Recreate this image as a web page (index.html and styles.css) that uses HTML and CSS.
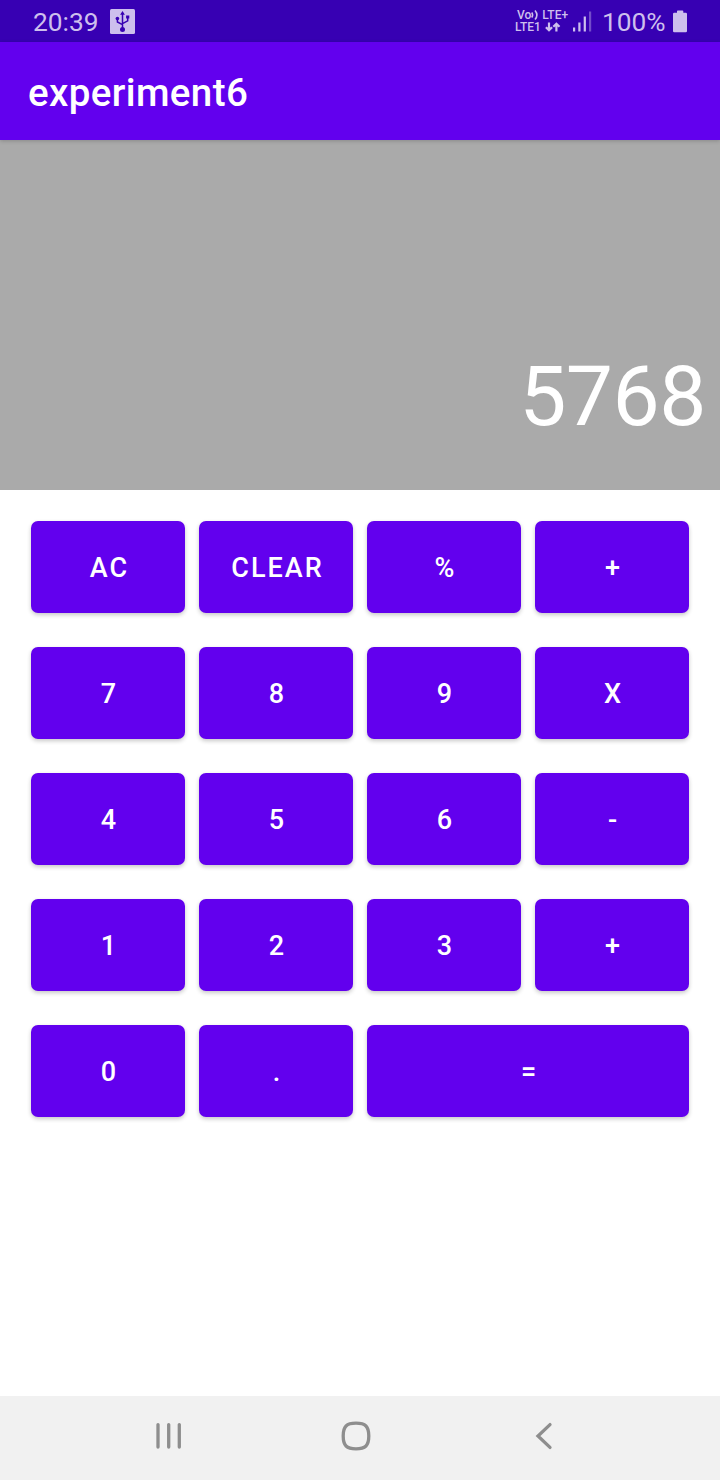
FILE: index.html
```html
<!DOCTYPE html>
<html lang="en">
<head>
<meta charset="utf-8">
<title>experiment6</title>
<link rel="stylesheet" href="styles.css">
</head>
<body>
<div class="screen">
  <div class="status">
    <span class="clock">20:39</span>
    <svg class="usb" width="25" height="25" viewBox="0 0 25 25">
      <rect class="usb-box" width="25" height="25" rx="1.5"/>
      <path class="usb-line" d="M12.5 21V4M12.500 15.700L7.400 13V9.500M12.500 14.700L17.700 11.800V8"/>
      <path class="usb-fill" d="M12.5 2L14.900 5.800H10.100zM16.100 6.400h3.200v3.200h-3.200z"/>
      <circle class="usb-fill" cx="7.4" cy="9.6" r="1.8"/>
      <circle class="usb-fill" cx="12.5" cy="20.6" r="2.5"/>
    </svg>
    <div class="network">
      <div class="net-row net-top"><span class="vo">Vo</span><svg class="waves" width="8" height="12" viewBox="0 0 8 12"><path d="M.7 3.500Q2.500 6 .7 8.500M4 1.500Q7.800 6 4 10.500"/></svg><span class="lte">LTE+</span></div>
      <div class="net-row"><span class="lte1">LTE1</span><svg class="arrows" width="16" height="10" viewBox="0 0 16 10"><path d="M4 .5V8.500M.9 5.200L4 8.300L7.100 5.200M11.400 9.500V1.500M8.300 4.800L11.400 1.700L14.500 4.800"/></svg></div>
    </div>
    <svg class="signal" width="19" height="21" viewBox="0 0 19 21"><path d="M0 16.500h2.200v4H0zM5.300 11.500h2.200v9H5.300zM10.700 5.500h2.200v15h-2.200z"/><path class="dim" d="M16 .5h2.200v20H16z"/></svg>
    <span class="percent">100%</span>
    <svg class="battery" width="14" height="23" viewBox="0 0 14 23"><path d="M4 1.2Q4 .4 4.8.4H9.5Q10.3.4 10.3 1.2V2.8H12.8Q14 2.8 14 4V21Q14 22.2 12.8 22.2H1.2Q0 22.2 0 21V4Q0 2.8 1.2 2.8H4z"/></svg>
  </div>
  <header class="appbar"><h1 class="title">experiment6</h1></header>
  <div class="display">5768</div>
  <main class="keys">
    <button class="key">AC</button><button class="key">CLEAR</button><button class="key">%</button><button class="key">+</button>
    <button class="key">7</button><button class="key">8</button><button class="key">9</button><button class="key">X</button>
    <button class="key">4</button><button class="key">5</button><button class="key">6</button><button class="key">-</button>
    <button class="key">1</button><button class="key">2</button><button class="key">3</button><button class="key">+</button>
    <button class="key">0</button><button class="key">.</button><button class="key wide">=</button>
  </main>
  <nav class="navbar">
    <svg width="26" height="28" viewBox="0 0 26 28"><path d="M2 2.6V25M12.700 2.6V25M23.300 2.6V25"/></svg>
    <svg class="home" width="30" height="30" viewBox="0 0 30 30"><path d="M15 2.200C24.500 2.200 27.800 5.500 27.800 15S24.500 27.800 15 27.800S2.200 24.500 2.200 15S5.500 2.200 15 2.200z"/></svg>
    <svg width="18" height="28" viewBox="0 0 18 28"><path d="M15 2.600L3 14L15 25.400"/></svg>
  </nav>
</div>
</body>
</html>
```
FILE: styles.css
```css
body {
  margin: 0;
  font-family: Roboto, "Liberation Sans", sans-serif;
}
.screen {
  display: flex;
  flex-direction: column;
  width: 720px;
  height: 1480px;
  background: #fff;
}
.status {
  display: flex;
  align-items: center;
  box-sizing: border-box;
  height: 42px;
  padding: 0 33px 0 33px;
  background: #3700b3;
  color: #cdbfed;
}
.status svg { flex: none; }
.clock, .percent {
  font-size: 26.3px;
  line-height: 42px;
  padding-top: 1px;
}
.clock { width: 77px; }
.usb-box { fill: #cdbfed; }
.usb-line { fill: none; stroke: #3700b3; stroke-width: 1.5; }
.usb-fill { fill: #3700b3; }
.network {
  width: 53px;
  margin-left: auto;
  font-size: 12px;
  font-weight: 500;
  line-height: 12px;
}
.net-row { display: flex; align-items: center; height: 12px; }
.net-top { padding-left: 2px; }
.waves { margin-right: 3px; }
.waves path, .arrows path { fill: none; stroke: #cdbfed; }
.waves path { stroke-width: 1.6; }
.arrows { margin-left: 4px; }
.arrows path { stroke-width: 2.2; }
.signal { margin: 0 10px 0 5px; fill: #cdbfed; }
.dim { opacity: .4; }
.percent { width: 71px; box-sizing: border-box; }
.battery { fill: #cdbfed; }
.appbar {
  display: flex;
  align-items: center;
  height: 98px;
  padding: 0 28px;
  background: #6200ee;
  position: relative;
  box-shadow: 0 1px 4px rgba(0, 0, 0, .2);
}
.title {
  margin: 3px 0 0;
  color: #fff;
  font-size: 38.5px;
  font-weight: 500;
  line-height: 46px;
  letter-spacing: .38px;
}
.display {
  display: flex;
  justify-content: flex-end;
  align-items: flex-end;
  box-sizing: border-box;
  height: 350px;
  padding: 0 14px 44px 0;
  background: #aaa;
  color: #fff;
  font-size: 84px;
  line-height: 98px;
  letter-spacing: -.5px;
}
.keys {
  display: grid;
  grid-template-columns: repeat(4, 154px);
  grid-auto-rows: 92px;
  gap: 34px 14px;
  padding: 31px;
}
.key {
  padding: 2px 0 0 3px;
  border: 0;
  border-radius: 7px;
  background: #6200ee;
  box-shadow: 0 2px 4px rgba(0, 0, 0, .22);
  color: #fff;
  font: 500 27px/32px Roboto, "Liberation Sans", sans-serif;
  letter-spacing: 2px;
}
.wide { grid-column: span 2; }
.navbar {
  display: flex;
  justify-content: space-between;
  align-items: center;
  box-sizing: border-box;
  height: 84px;
  margin-top: auto;
  padding: 0 167px 4px 156px;
  background: #f1f1f1;
}
.home { margin-right: 5px; }
.navbar path {
  fill: none;
  stroke: #8e8e8e;
  stroke-width: 3.3;
  stroke-linecap: round;
}
```
